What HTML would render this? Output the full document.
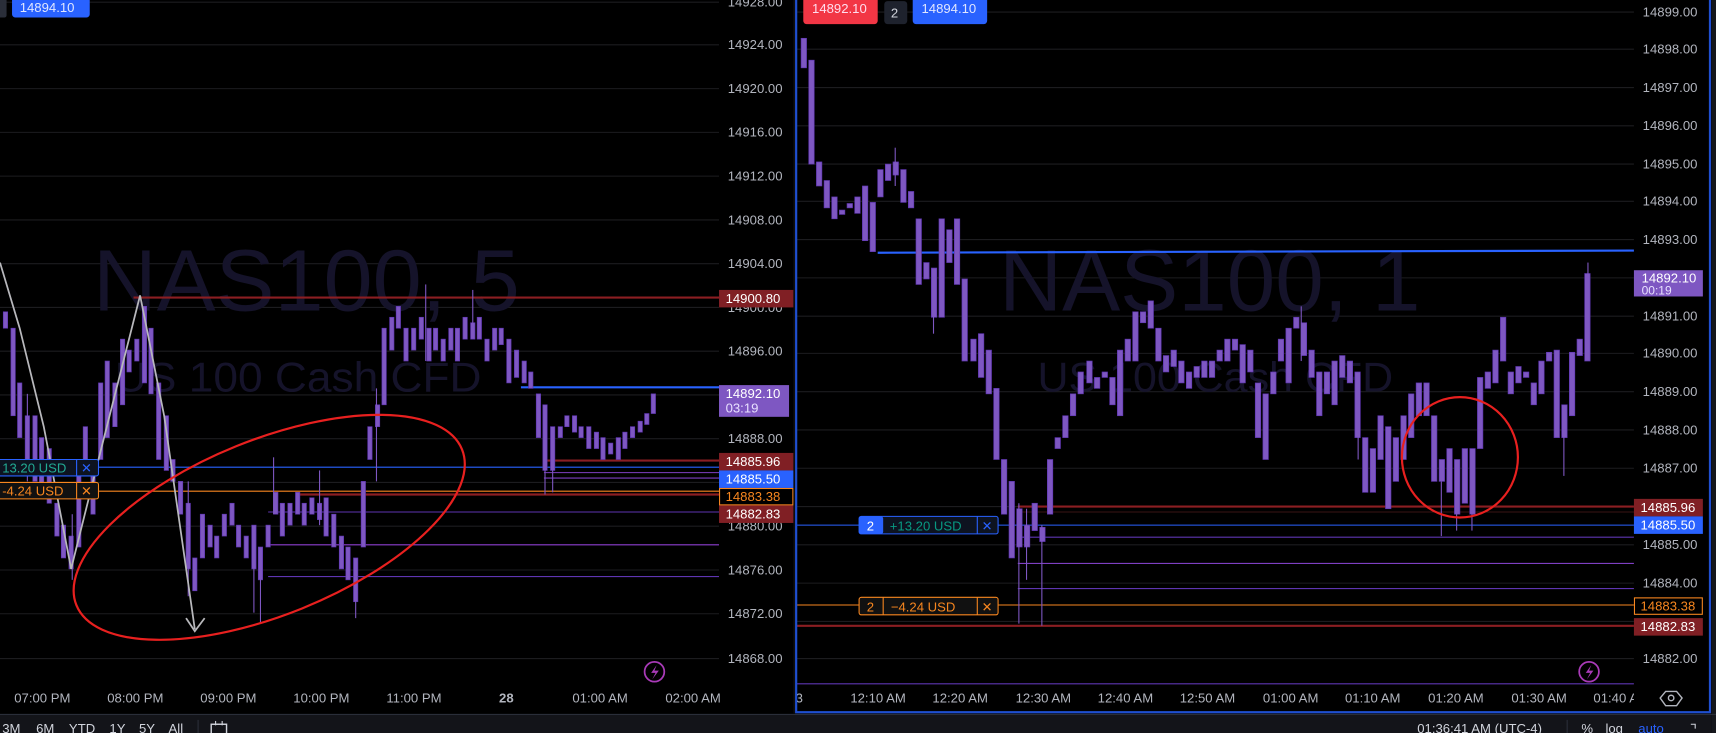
<!DOCTYPE html>
<html><head><meta charset="utf-8"><style>
html,body{margin:0;padding:0;background:#000;overflow:hidden}
svg{display:block}
text{font-family:"Liberation Sans",sans-serif}
</style></head><body>
<svg width="1716" height="733" viewBox="0 0 1568 670" preserveAspectRatio="none" xmlns="http://www.w3.org/2000/svg">
<rect width="1568" height="670" fill="#000"/>
<g stroke="#1c1c1f" stroke-width="1">
<line x1="0" y1="2" x2="657" y2="2"/><line x1="0" y1="41" x2="657" y2="41"/><line x1="0" y1="81" x2="657" y2="81"/><line x1="0" y1="121" x2="657" y2="121"/><line x1="0" y1="161" x2="657" y2="161"/><line x1="0" y1="201" x2="657" y2="201"/><line x1="0" y1="241" x2="657" y2="241"/><line x1="0" y1="281" x2="657" y2="281"/><line x1="0" y1="321" x2="657" y2="321"/><line x1="0" y1="361" x2="657" y2="361"/><line x1="0" y1="401" x2="657" y2="401"/><line x1="0" y1="441" x2="657" y2="441"/><line x1="0" y1="481" x2="657" y2="481"/><line x1="0" y1="521" x2="657" y2="521"/><line x1="0" y1="561" x2="657" y2="561"/><line x1="0" y1="602" x2="657" y2="602"/>
</g>
<g stroke="#1c1c1f" stroke-width="1">
<line x1="728" y1="11" x2="1493" y2="11"/><line x1="728" y1="45" x2="1493" y2="45"/><line x1="728" y1="80" x2="1493" y2="80"/><line x1="728" y1="115" x2="1493" y2="115"/><line x1="728" y1="150" x2="1493" y2="150"/><line x1="728" y1="184" x2="1493" y2="184"/><line x1="728" y1="219" x2="1493" y2="219"/><line x1="728" y1="254" x2="1493" y2="254"/><line x1="728" y1="289" x2="1493" y2="289"/><line x1="728" y1="323" x2="1493" y2="323"/><line x1="728" y1="358" x2="1493" y2="358"/><line x1="728" y1="393" x2="1493" y2="393"/><line x1="728" y1="428" x2="1493" y2="428"/><line x1="728" y1="463" x2="1493" y2="463"/><line x1="728" y1="498" x2="1493" y2="498"/><line x1="728" y1="533" x2="1493" y2="533"/><line x1="728" y1="568" x2="1493" y2="568"/><line x1="728" y1="602" x2="1493" y2="602"/>
</g>
<g fill="#15132a">
<text x="85" y="284" font-size="80" textLength="390" lengthAdjust="spacingAndGlyphs">NAS100, 5</text>
<text x="105" y="358" font-size="38" textLength="335" lengthAdjust="spacingAndGlyphs">US 100 Cash CFD</text>
<text x="913" y="284" font-size="80" textLength="385" lengthAdjust="spacingAndGlyphs">NAS100, 1</text>
<text x="948" y="358" font-size="38" textLength="325" lengthAdjust="spacingAndGlyphs">US 100 Cash CFD</text>
</g>
<line x1="122" y1="272" x2="657" y2="272" stroke="#8b1e22" stroke-width="2"/>
<line x1="476" y1="354" x2="657" y2="354" stroke="#2962ff" stroke-width="2"/>
<line x1="497" y1="421" x2="657" y2="421" stroke="#8b1e22" stroke-width="2"/>
<line x1="0" y1="427" x2="657" y2="427" stroke="#2962ff"/>
<line x1="497" y1="432" x2="657" y2="432" stroke="#7e3fc2"/>
<line x1="497" y1="437" x2="657" y2="437" stroke="#7e3fc2"/>
<line x1="0" y1="449" x2="657" y2="449" stroke="#f7861f"/>
<line x1="270" y1="452" x2="657" y2="452" stroke="#8b1e22" stroke-width="2"/>
<line x1="245" y1="468" x2="657" y2="468" stroke="#5e35b1"/>
<line x1="245" y1="498" x2="657" y2="498" stroke="#8e3fd0"/>
<line x1="245" y1="527" x2="657" y2="527" stroke="#5e35b1"/>
<line x1="802" y1="231" x2="1493" y2="229" stroke="#2962ff" stroke-width="2"/>
<line x1="930" y1="463" x2="1493" y2="463" stroke="#8b1e22" stroke-width="2"/>
<line x1="930" y1="468" x2="1493" y2="468" stroke="#3a1515"/>
<line x1="728" y1="480" x2="1493" y2="480" stroke="#2962ff"/>
<line x1="930" y1="491" x2="1493" y2="491" stroke="#5e35b1"/>
<line x1="930" y1="515" x2="1493" y2="515" stroke="#7e3fc2"/>
<line x1="930" y1="538" x2="1493" y2="538" stroke="#5e35b1"/>
<line x1="728" y1="553" x2="1493" y2="553" stroke="#f7861f"/>
<line x1="728" y1="572" x2="1493" y2="572" stroke="#8b1e22" stroke-width="2"/>
<line x1="728" y1="625" x2="1493" y2="625" stroke="#5e35b1"/>
<g fill="#7e57c2" stroke="#5e35b1" stroke-width="0.6">
<rect x="3" y="285" width="4" height="15"/><rect x="10" y="300" width="4" height="80"/><rect x="16" y="350" width="4" height="50"/><rect x="23" y="380" width="4" height="50"/><rect x="30" y="380" width="4" height="60"/><rect x="36" y="400" width="4" height="50"/><rect x="43" y="410" width="4" height="50"/><rect x="50" y="460" width="4" height="30"/><rect x="56" y="480" width="4" height="30"/><rect x="63" y="490" width="4" height="30"/><rect x="70" y="430" width="4" height="70"/><rect x="76" y="390" width="4" height="40"/><rect x="83" y="420" width="4" height="50"/><rect x="90" y="350" width="4" height="70"/><rect x="96" y="330" width="4" height="70"/><rect x="103" y="350" width="4" height="40"/><rect x="110" y="310" width="4" height="60"/><rect x="116" y="320" width="4" height="20"/><rect x="123" y="310" width="4" height="20"/><rect x="130" y="280" width="4" height="70"/><rect x="136" y="300" width="4" height="60"/><rect x="143" y="350" width="4" height="70"/><rect x="150" y="380" width="4" height="50"/><rect x="156" y="420" width="4" height="20"/><rect x="163" y="440" width="4" height="30"/><rect x="170" y="460" width="4" height="60"/><rect x="176" y="510" width="4" height="30"/><rect x="183" y="470" width="4" height="40"/><rect x="190" y="480" width="4" height="20"/><rect x="196" y="490" width="4" height="20"/><rect x="203" y="470" width="4" height="20"/><rect x="210" y="460" width="4" height="20"/><rect x="216" y="480" width="4" height="20"/><rect x="223" y="490" width="4" height="20"/><rect x="230" y="480" width="4" height="40"/><rect x="236" y="500" width="4" height="30"/><rect x="243" y="480" width="4" height="20"/><rect x="250" y="450" width="4" height="20"/><rect x="256" y="460" width="4" height="30"/><rect x="263" y="460" width="4" height="20"/><rect x="270" y="450" width="4" height="20"/><rect x="276" y="460" width="4" height="20"/><rect x="283" y="455" width="4" height="15"/><rect x="290" y="460" width="4" height="15"/><rect x="296" y="455" width="4" height="35"/><rect x="303" y="470" width="4" height="30"/><rect x="310" y="490" width="4" height="30"/><rect x="316" y="500" width="4" height="30"/><rect x="323" y="510" width="4" height="40"/><rect x="330" y="440" width="4" height="60"/><rect x="336" y="390" width="4" height="30"/><rect x="343" y="370" width="4" height="20"/><rect x="349" y="300" width="4" height="70"/><rect x="356" y="290" width="4" height="30"/><rect x="362" y="280" width="4" height="20"/><rect x="369" y="300" width="4" height="30"/><rect x="376" y="300" width="4" height="20"/><rect x="383" y="290" width="4" height="20"/><rect x="390" y="300" width="4" height="30"/><rect x="396" y="300" width="4" height="20"/><rect x="403" y="310" width="4" height="20"/><rect x="410" y="300" width="4" height="20"/><rect x="416" y="300" width="4" height="30"/><rect x="423" y="290" width="4" height="20"/><rect x="430" y="295" width="4" height="15"/><rect x="436" y="290" width="4" height="20"/><rect x="443" y="310" width="4" height="20"/><rect x="450" y="300" width="4" height="20"/><rect x="456" y="300" width="4" height="15"/><rect x="463" y="310" width="4" height="40"/><rect x="470" y="320" width="4" height="25"/><rect x="477" y="330" width="4" height="20"/><rect x="483" y="340" width="4" height="15"/><rect x="490" y="360" width="4" height="40"/><rect x="496" y="370" width="4" height="60"/><rect x="503" y="390" width="4" height="40"/><rect x="510" y="390" width="4" height="10"/><rect x="516" y="380" width="4" height="10"/><rect x="523" y="380" width="4" height="15"/><rect x="529" y="390" width="4" height="10"/><rect x="536" y="390" width="4" height="20"/><rect x="543" y="395" width="4" height="15"/><rect x="549" y="400" width="4" height="20"/><rect x="556" y="405" width="4" height="10"/><rect x="563" y="400" width="4" height="20"/><rect x="569" y="395" width="4" height="15"/><rect x="576" y="390" width="4" height="10"/><rect x="583" y="385" width="4" height="10"/><rect x="589" y="378" width="4" height="10"/><rect x="595" y="360" width="4" height="18"/>
</g>
<g stroke="#7e57c2" stroke-width="1">
<line x1="25" y1="360" x2="25" y2="440"/><line x1="66" y1="470" x2="66" y2="530"/><line x1="172" y1="440" x2="172" y2="545"/><line x1="232" y1="500" x2="232" y2="560"/><line x1="238" y1="520" x2="238" y2="570"/><line x1="325" y1="540" x2="325" y2="565"/><line x1="389" y1="260" x2="389" y2="330"/><line x1="432" y1="265" x2="432" y2="300"/><line x1="498" y1="420" x2="498" y2="452"/><line x1="505" y1="420" x2="505" y2="450"/><line x1="250" y1="418" x2="250" y2="470"/><line x1="292" y1="430" x2="292" y2="480"/><line x1="344" y1="355" x2="344" y2="440"/>
</g>
<polyline points="0,240 18,300 40,390 65,520 90,420 128,270 150,380 178,575" fill="none" stroke="#b8b8bc" stroke-width="1.6"/>
<polyline points="170,565 178,577 187,565" fill="none" stroke="#b8b8bc" stroke-width="1.6"/>
<ellipse cx="246" cy="482" rx="190" ry="80" transform="rotate(-22 246 482)" fill="none" stroke="#e8201f" stroke-width="2"/>
<g fill="#7e57c2" stroke="#5e35b1" stroke-width="0.6">
<rect x="732" y="35" width="5" height="27"/><rect x="739" y="55" width="5" height="95"/><rect x="746" y="148" width="5" height="22"/><rect x="753" y="165" width="5" height="25"/><rect x="760" y="180" width="5" height="20"/><rect x="767" y="192" width="5" height="4"/><rect x="774" y="186" width="5" height="4"/><rect x="781" y="180" width="5" height="15"/><rect x="788" y="170" width="5" height="50"/><rect x="795" y="185" width="5" height="45"/><rect x="802" y="155" width="5" height="25"/><rect x="809" y="150" width="5" height="15"/><rect x="816" y="148" width="5" height="12"/><rect x="823" y="155" width="5" height="30"/><rect x="830" y="175" width="5" height="15"/><rect x="837" y="200" width="5" height="60"/><rect x="844" y="240" width="5" height="15"/><rect x="851" y="245" width="5" height="45"/><rect x="858" y="200" width="5" height="90"/><rect x="865" y="210" width="5" height="30"/><rect x="872" y="200" width="5" height="60"/><rect x="879" y="255" width="5" height="75"/><rect x="887" y="310" width="5" height="20"/><rect x="894" y="305" width="5" height="40"/><rect x="901" y="320" width="5" height="40"/><rect x="908" y="355" width="5" height="65"/><rect x="915" y="420" width="5" height="50"/><rect x="922" y="440" width="5" height="70"/><rect x="929" y="465" width="5" height="35"/><rect x="936" y="480" width="5" height="20"/><rect x="943" y="460" width="5" height="25"/><rect x="950" y="482" width="5" height="13"/><rect x="957" y="420" width="5" height="50"/><rect x="964" y="400" width="5" height="10"/><rect x="971" y="380" width="5" height="20"/><rect x="978" y="360" width="5" height="20"/><rect x="985" y="340" width="5" height="20"/><rect x="993" y="330" width="5" height="20"/><rect x="1000" y="345" width="5" height="10"/><rect x="1007" y="340" width="5" height="5"/><rect x="1014" y="345" width="5" height="25"/><rect x="1021" y="320" width="5" height="60"/><rect x="1028" y="310" width="5" height="20"/><rect x="1035" y="285" width="5" height="45"/><rect x="1042" y="285" width="5" height="10"/><rect x="1049" y="275" width="5" height="25"/><rect x="1056" y="300" width="5" height="30"/><rect x="1063" y="325" width="5" height="15"/><rect x="1070" y="320" width="5" height="15"/><rect x="1077" y="330" width="5" height="20"/><rect x="1084" y="340" width="5" height="15"/><rect x="1091" y="335" width="5" height="10"/><rect x="1098" y="330" width="5" height="15"/><rect x="1105" y="330" width="5" height="15"/><rect x="1112" y="320" width="5" height="10"/><rect x="1119" y="310" width="5" height="20"/><rect x="1126" y="310" width="5" height="10"/><rect x="1133" y="315" width="5" height="35"/><rect x="1140" y="320" width="5" height="20"/><rect x="1147" y="350" width="5" height="50"/><rect x="1154" y="360" width="5" height="60"/><rect x="1161" y="340" width="5" height="20"/><rect x="1168" y="310" width="5" height="20"/><rect x="1175" y="300" width="5" height="50"/><rect x="1182" y="290" width="5" height="10"/><rect x="1189" y="295" width="5" height="30"/><rect x="1196" y="320" width="5" height="25"/><rect x="1203" y="340" width="5" height="40"/><rect x="1210" y="340" width="5" height="20"/><rect x="1217" y="330" width="5" height="40"/><rect x="1224" y="325" width="5" height="20"/><rect x="1231" y="330" width="5" height="20"/><rect x="1238" y="340" width="5" height="60"/><rect x="1245" y="400" width="5" height="50"/><rect x="1252" y="410" width="5" height="40"/><rect x="1259" y="380" width="5" height="40"/><rect x="1266" y="390" width="5" height="75"/><rect x="1273" y="400" width="5" height="40"/><rect x="1280" y="380" width="5" height="40"/><rect x="1287" y="360" width="5" height="40"/><rect x="1294" y="350" width="5" height="30"/><rect x="1301" y="350" width="5" height="30"/><rect x="1308" y="380" width="5" height="60"/><rect x="1315" y="420" width="5" height="20"/><rect x="1322" y="410" width="5" height="40"/><rect x="1329" y="420" width="5" height="50"/><rect x="1336" y="410" width="5" height="50"/><rect x="1343" y="410" width="5" height="60"/><rect x="1350" y="345" width="5" height="65"/><rect x="1357" y="340" width="5" height="15"/><rect x="1364" y="320" width="5" height="30"/><rect x="1371" y="290" width="5" height="40"/><rect x="1378" y="340" width="5" height="20"/><rect x="1385" y="335" width="5" height="15"/><rect x="1392" y="340" width="5" height="5"/><rect x="1399" y="350" width="5" height="20"/><rect x="1406" y="330" width="5" height="30"/><rect x="1413" y="322" width="5" height="8"/><rect x="1420" y="320" width="5" height="80"/><rect x="1427" y="370" width="5" height="30"/><rect x="1434" y="322" width="5" height="58"/><rect x="1441" y="310" width="5" height="15"/><rect x="1448" y="250" width="5" height="80"/>
</g>
<g stroke="#7e57c2" stroke-width="1">
<line x1="818" y1="135" x2="818" y2="170"/><line x1="853" y1="285" x2="853" y2="305"/><line x1="931" y1="460" x2="931" y2="570"/><line x1="938" y1="465" x2="938" y2="530"/><line x1="952" y1="480" x2="952" y2="572"/><line x1="1189" y1="280" x2="1189" y2="330"/><line x1="1317" y1="440" x2="1317" y2="490"/><line x1="1331" y1="460" x2="1331" y2="485"/><line x1="1345" y1="440" x2="1345" y2="485"/><line x1="1429" y1="390" x2="1429" y2="435"/><line x1="1451" y1="240" x2="1451" y2="255"/><line x1="1241" y1="360" x2="1241" y2="420"/>
</g>
<ellipse cx="1334" cy="418" rx="53" ry="55" fill="none" stroke="#e8201f" stroke-width="2"/>
<rect x="-10" y="420" width="100" height="15" rx="2" fill="#0d1320" stroke="#2962ff"/>
<text x="2" y="432" font-size="12" fill="#22ab94">13.20 USD</text>
<line x1="70" y1="420" x2="70" y2="435" stroke="#2962ff"/><text x="74" y="432" font-size="12" fill="#2962ff">✕</text>
<rect x="-10" y="441" width="100" height="15" rx="2" fill="#111" stroke="#f7861f"/>
<text x="2" y="453" font-size="12" fill="#f7861f">-4.24 USD</text>
<line x1="70" y1="441" x2="70" y2="456" stroke="#f7861f"/><text x="74" y="453" font-size="12" fill="#f7861f">✕</text>
<rect x="-4" y="-4" width="10" height="20" rx="2" fill="#2a2e39"/>
<rect x="11" y="-4" width="71" height="20" rx="3" fill="#2962ff"/>
<text x="18" y="11" font-size="12" fill="#e0e6ff">14894.10</text>
<rect x="734" y="-4" width="68" height="26" rx="3" fill="#f23645"/>
<text x="742" y="12" font-size="12" fill="#fde">14892.10</text>
<rect x="808" y="1" width="21" height="21" rx="3" fill="#1e222d"/>
<text x="814" y="16" font-size="12" fill="#d1d4dc">2</text>
<rect x="834" y="-4" width="68" height="26" rx="3" fill="#2962ff"/>
<text x="842" y="12" font-size="12" fill="#e0e6ff">14894.10</text>
<rect x="785" y="472" width="127" height="16" rx="2" fill="#0d1320" stroke="#2962ff"/>
<rect x="785" y="472" width="22" height="16" rx="2" fill="#2962ff"/>
<text x="792" y="485" font-size="12" fill="#fff">2</text>
<text x="813" y="485" font-size="12" fill="#089981">+13.20 USD</text>
<line x1="893" y1="472" x2="893" y2="488" stroke="#2962ff"/><text x="897" y="485" font-size="12" fill="#2962ff">✕</text>
<rect x="785" y="546" width="127" height="16" rx="2" fill="#111" stroke="#f7861f"/>
<text x="792" y="559" font-size="12" fill="#f7861f">2</text><line x1="807" y1="546" x2="807" y2="562" stroke="#f7861f"/>
<text x="814" y="559" font-size="12" fill="#f7861f">−4.24 USD</text>
<line x1="893" y1="546" x2="893" y2="562" stroke="#f7861f"/><text x="897" y="559" font-size="12" fill="#f7861f">✕</text>
<g font-size="12" fill="#b2b5be">
<text x="665" y="6">14928.00</text><text x="665" y="45">14924.00</text><text x="665" y="85">14920.00</text><text x="665" y="125">14916.00</text><text x="665" y="165">14912.00</text><text x="665" y="205">14908.00</text><text x="665" y="245">14904.00</text><text x="665" y="285">14900.00</text><text x="665" y="325">14896.00</text><text x="665" y="405">14888.00</text><text x="665" y="485">14880.00</text><text x="665" y="525">14876.00</text><text x="665" y="565">14872.00</text><text x="665" y="606">14868.00</text>
</g>
<rect x="657" y="265" width="68" height="16" fill="#801f24"/><text x="663" y="277" font-size="12" fill="#fff">14900.80</text>
<rect x="657" y="352" width="64" height="29" fill="#7e57c2"/><text x="663" y="364" font-size="12" fill="#fff">14892.10</text><text x="663" y="377" font-size="12" fill="#e8e0ff">03:19</text>
<rect x="657" y="414" width="68" height="16" fill="#801f24"/><text x="663" y="426" font-size="12" fill="#fff">14885.96</text>
<rect x="657" y="430" width="68" height="16" fill="#2962ff"/><text x="663" y="442" font-size="12" fill="#fff">14885.50</text>
<rect x="657.5" y="446.5" width="67" height="15" fill="#000" stroke="#f7861f"/><text x="663" y="458" font-size="12" fill="#f7861f">14883.38</text>
<rect x="657" y="462" width="68" height="16" fill="#801f24"/><text x="663" y="474" font-size="12" fill="#fff">14882.83</text>
<g font-size="12" fill="#b2b5be">
<text x="1501" y="15">14899.00</text><text x="1501" y="49">14898.00</text><text x="1501" y="84">14897.00</text><text x="1501" y="119">14896.00</text><text x="1501" y="154">14895.00</text><text x="1501" y="188">14894.00</text><text x="1501" y="223">14893.00</text><text x="1501" y="293">14891.00</text><text x="1501" y="327">14890.00</text><text x="1501" y="362">14889.00</text><text x="1501" y="397">14888.00</text><text x="1501" y="432">14887.00</text><text x="1501" y="502">14885.00</text><text x="1501" y="537">14884.00</text><text x="1501" y="606">14882.00</text>
</g>
<rect x="1493" y="247" width="63" height="24" fill="#7e57c2"/><text x="1500" y="258" font-size="12" fill="#fff">14892.10</text><text x="1500" y="269" font-size="11" fill="#e8e0ff">00:19</text>
<rect x="1493" y="456" width="63" height="16" fill="#801f24"/><text x="1499" y="468" font-size="12" fill="#fff">14885.96</text>
<rect x="1493" y="472" width="63" height="16" fill="#2962ff"/><text x="1499" y="484" font-size="12" fill="#fff">14885.50</text>
<rect x="1493.5" y="546.5" width="62" height="15" fill="#000" stroke="#f7861f"/><text x="1499" y="558" font-size="12" fill="#f7861f">14883.38</text>
<rect x="1493" y="565" width="63" height="16" fill="#801f24"/><text x="1499" y="577" font-size="12" fill="#fff">14882.83</text>
<g font-size="12" fill="#b2b5be">
<text x="13" y="642">07:00 PM</text><text x="98" y="642">08:00 PM</text><text x="183" y="642">09:00 PM</text><text x="268" y="642">10:00 PM</text><text x="353" y="642">11:00 PM</text><text x="456" y="642" font-weight="bold">28</text><text x="523" y="642">01:00 AM</text><text x="608" y="642">02:00 AM</text>
<text x="727" y="642">3</text><text x="777" y="642">12:10 AM</text><text x="852" y="642">12:20 AM</text><text x="928" y="642">12:30 AM</text><text x="1003" y="642">12:40 AM</text><text x="1078" y="642">12:50 AM</text><text x="1154" y="642">01:00 AM</text><text x="1229" y="642">01:10 AM</text><text x="1305" y="642">01:20 AM</text><text x="1381" y="642">01:30 AM</text><text x="1456" y="642">01:40 A</text>
</g>
<rect x="1493" y="625" width="70" height="26" fill="#000"/>
<circle cx="598" cy="614" r="9" fill="none" stroke="#a93ab8" stroke-width="1.6"/>
<path d="M600,608 L595,615 L599,615 L596,621 L602,613 L598,613 Z" fill="#a93ab8"/>
<circle cx="1452" cy="614" r="9" fill="none" stroke="#a93ab8" stroke-width="1.6"/>
<path d="M1454,608 L1449,615 L1453,615 L1450,621 L1456,613 L1452,613 Z" fill="#a93ab8"/>
<polygon points="1522,632 1532,632 1537,638 1532,645 1522,645 1517,638" fill="none" stroke="#b2b5be" stroke-width="1.3"/>
<circle cx="1527" cy="638" r="2.5" fill="none" stroke="#b2b5be" stroke-width="1.3"/>
<rect x="725" y="0" width="3" height="652" fill="#0e0e10"/>
<rect x="727.5" y="-2" width="835" height="653" fill="none" stroke="#1f4fd0" stroke-width="2"/>
<rect x="1564" y="0" width="4" height="670" fill="#15171c"/>
<rect x="0" y="653" width="1564" height="17" fill="#131419"/>
<line x1="0" y1="653" x2="1568" y2="653" stroke="#2a2e39"/>
<g font-size="12" fill="#d1d4dc">
<text x="2" y="670">3M</text><text x="33" y="670">6M</text><text x="63" y="670">YTD</text><text x="100" y="670">1Y</text><text x="127" y="670">5Y</text><text x="154" y="670">All</text>
<text x="1295" y="670">01:36:41 AM (UTC-4)</text><text x="1445" y="670">%</text><text x="1467" y="670">log</text><text x="1497" y="670" fill="#2962ff">auto</text>
</g>
<line x1="181" y1="658" x2="181" y2="670" stroke="#2a2e39"/>
<line x1="1432" y1="658" x2="1432" y2="670" stroke="#2a2e39"/>
<rect x="193" y="662" width="14" height="10" fill="none" stroke="#d1d4dc" stroke-width="1.3"/>
<line x1="197" y1="659" x2="197" y2="663" stroke="#d1d4dc"/><line x1="203" y1="659" x2="203" y2="663" stroke="#d1d4dc"/>
<path d="M1545,662 h4 v4" fill="none" stroke="#d1d4dc"/>
</svg>
</body></html>
